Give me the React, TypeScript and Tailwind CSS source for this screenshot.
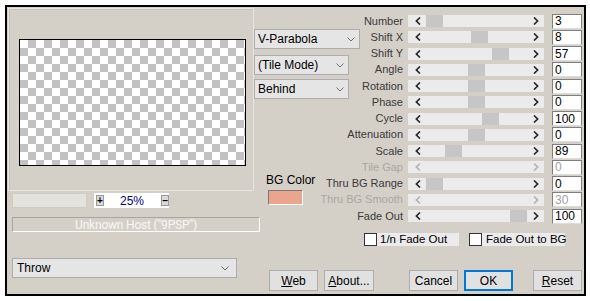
import React from "react";

type Row = {
  label: string;
  value: string;
  thumb: number | null;
  disabled?: boolean;
};

const rows: Row[] = [
  { label: "Number", value: "3", thumb: 2 },
  { label: "Shift X", value: "8", thumb: 47 },
  { label: "Shift Y", value: "57", thumb: 68 },
  { label: "Angle", value: "0", thumb: 44 },
  { label: "Rotation", value: "0", thumb: 44 },
  { label: "Phase", value: "0", thumb: 44 },
  { label: "Cycle", value: "100", thumb: 58 },
  { label: "Attenuation", value: "0", thumb: 44 },
  { label: "Scale", value: "89", thumb: 21 },
  { label: "Tile Gap", value: "0", thumb: null, disabled: true },
  { label: "Thru BG Range", value: "0", thumb: 2 },
  { label: "Thru BG Smooth", value: "30", thumb: null, disabled: true },
  { label: "Fade Out", value: "100", thumb: 86 },
];

const Chevron = ({ dir, disabled }: { dir: "left" | "right"; disabled?: boolean }) => (
  <svg width="6" height="8" viewBox="0 0 6 8">
    <polyline
      points={dir === "left" ? "5,0.5 1.4,4 5,7.5" : "1,0.5 4.6,4 1,7.5"}
      fill="none"
      stroke={disabled ? "#b4b4b4" : "#2a2a2a"}
      strokeWidth="1.7"
    />
  </svg>
);

const Slider = ({ thumb, disabled }: { thumb: number | null; disabled?: boolean }) => (
  <div className="flex h-[12px] w-[136px] items-center bg-[#ebebeb]">
    <div className="flex w-[16px] pl-[7px]">
      <Chevron dir="left" disabled={disabled} />
    </div>
    <div className="flex h-full w-[104px]">
      {thumb !== null ? (
        <div className="h-full w-[17px] bg-[#c6c6c6]" style={{ marginLeft: thumb }} />
      ) : null}
    </div>
    <div className="flex w-[16px] pl-[5px]">
      <Chevron dir="right" disabled={disabled} />
    </div>
  </div>
);

const DropDown = ({ text, w }: { text: string; w: string }) => (
  <div
    className={`flex h-[20px] items-center justify-between border border-[#adadad] bg-[#e5e5e5] pl-[3px] pr-[4px] text-[12px] ${w}`}
  >
    <span>{text}</span>
    <svg width="8" height="5" viewBox="0 0 8 5">
      <polyline points="0.5,0.5 4,4 7.5,0.5" fill="none" stroke="#707070" strokeWidth="1" />
    </svg>
  </div>
);

const Button = ({ children, ok, ml }: { children: React.ReactNode; ok?: boolean; ml: string }) => (
  <div
    className={`flex h-[21px] w-[49px] items-center justify-center bg-[#e1e1e1] text-[12px] ${ml} ${
      ok ? "border-2 border-[#0078d7]" : "border border-[#adadad]"
    }`}
  >
    {children}
  </div>
);

const App = () => {
  return (
    <div className="h-[301px] w-[590px] bg-white pl-[5px] pt-[5px] font-['Liberation_Sans',Arial,sans-serif] text-black">
      <div className="flex h-[291px] w-[581px] border-2 border-black bg-[#d4d0c8]">
        {/* left column: preview + zoom + host + preset */}
        <div className="flex w-[247px] shrink-0 flex-col">
          <div className="ml-[1px] mt-[1px] h-[183px] w-[246px] border border-[#e7e5e0] shadow-[inset_1px_1px_0_#c6c2ba]">
            <div className="ml-[10px] mt-[30px] h-[127px] w-[227px] border border-black bg-[conic-gradient(#c3c3c3_25%,#fff_0_50%,#c3c3c3_0_75%,#fff_0)] bg-[length:16px_16px]" />
          </div>
          <div className="ml-[5px] mt-[2px] flex">
            <div className="h-[15px] w-[75px] border border-[#cfccc6] bg-[#e3e2df]" />
            <div className="ml-[7px] flex h-[15px] w-[75px] items-center bg-white">
              <div className="ml-[2px] flex h-[11px] w-[10px] items-center justify-center border border-[#9a9a9a] bg-[#d9d9d9] text-[10px] font-bold leading-none">
                +
              </div>
              <span className="ml-[16px] text-[12px] leading-none text-[#000080]">25%</span>
              <div className="ml-[17px] flex h-[11px] w-[10px] items-center justify-center border border-[#9a9a9a] bg-[#d9d9d9] text-[10px] font-bold leading-none">
                –
              </div>
            </div>
          </div>
          <div className="ml-[5px] mt-[9px] flex h-[15px] w-[248px] shrink-0 items-center justify-center border border-[#a9a6a0] border-b-white border-r-white font-['Roboto',sans-serif] text-[12px] tracking-[-0.2px] text-[#f8f7f4]">
            Unknown Host ("9PSP")
          </div>
          <div className="ml-[5px] mt-[26px]">
            <div className="flex h-[20px] w-[225px] items-center justify-between border border-[#adadad] bg-[#e5e5e5] pl-[4px] pr-[7px] text-[12px]">
              <span>Throw</span>
              <svg width="8" height="5" viewBox="0 0 8 5">
                <polyline points="0.5,0.5 4,4 7.5,0.5" fill="none" stroke="#707070" strokeWidth="1" />
              </svg>
            </div>
          </div>
        </div>

        {/* right part */}
        <div className="flex flex-col">
          <div className="flex">
            <div className="flex w-[106px] shrink-0 flex-col">
              <div className="mt-[22px]">
                <DropDown text="V-Parabola" w="w-[106px]" />
              </div>
              <div className="mt-[6px]">
                <DropDown text="(Tile Mode)" w="w-[95px]" />
              </div>
              <div className="mt-[4px]">
                <DropDown text="Behind" w="w-[95px]" />
              </div>
              <div className="ml-[12px] mt-[75px] h-[13px] text-[12px] leading-[13px]">BG Color</div>
              <div className="ml-[14px] mt-[3px] h-[15px] w-[35px] border border-[#7a7a7a] border-b-white border-r-white bg-[#eaa58e]" />
            </div>
            <div className="ml-[-60px] mt-[6px] flex flex-col">
              {rows.map((r) => (
                <div key={r.label} className="flex h-[16.25px] items-center">
                  <div
                    className={`w-[103px] whitespace-nowrap text-right text-[11px] leading-[13px] ${
                      r.disabled ? "text-[#aaa7a1]" : "text-[#3a3a3a]"
                    }`}
                  >
                    {r.label}
                  </div>
                  <div className="ml-[5px]">
                    <Slider thumb={r.thumb} disabled={r.disabled} />
                  </div>
                  <div
                    className={`ml-[8px] flex h-[15px] w-[30px] items-center border border-[#7f7f7f] border-b-[#dcdcdc] bg-white pl-[2px] text-[12px] ${
                      r.disabled ? "text-[#a0a0a0]" : "text-black"
                    }`}
                  >
                    {r.value}
                  </div>
                </div>
              ))}
            </div>
          </div>

          <div className="ml-[110px] mt-[9px] flex items-center whitespace-nowrap text-[11.5px]">
            <div className="h-[13px] w-[13px] border border-[#333] bg-white" />
            <div className="flex h-[13px] w-[82px] items-center bg-[#ebebeb] pl-[3px]">1/n Fade Out</div>
            <div className="ml-[10px] h-[13px] w-[13px] border border-[#333] bg-white" />
            <div className="flex h-[13px] w-[83px] items-center bg-[#ebebeb] pl-[4px]">Fade Out to BG</div>
          </div>

          <div className="mt-[24px] flex">
            <Button ml="ml-[15px]">
              <span>
                <span className="underline">W</span>eb
              </span>
            </Button>
            <div className="ml-[6px] flex h-[21px] w-[50px] items-center justify-center border border-[#adadad] bg-[#e1e1e1] text-[12px]">
              <span>
                <span className="underline">A</span>bout...
              </span>
            </div>
            <Button ml="ml-[35px]">Cancel</Button>
            <Button ml="ml-[6px]" ok>
              OK
            </Button>
            <Button ml="ml-[20px]">
              <span>
                <span className="underline">R</span>eset
              </span>
            </Button>
          </div>
        </div>
      </div>
    </div>
  );
};

export default App;
